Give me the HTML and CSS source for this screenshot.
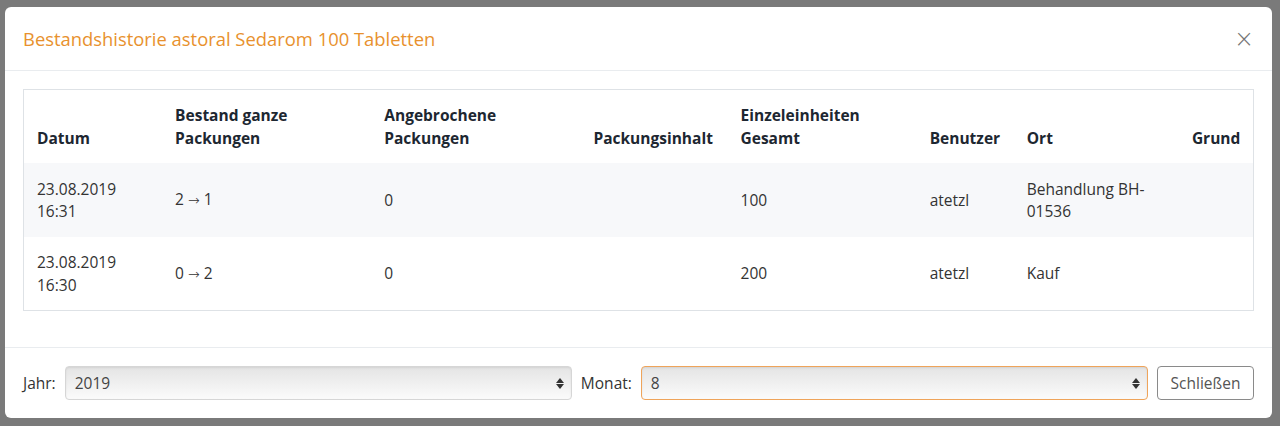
FILE: index.html
```html
<!DOCTYPE html>
<html lang="de">
<head>
<meta charset="utf-8">
<title>Bestandshistorie</title>
<link rel="stylesheet" href="styles.css">
</head>
<body>
<div class="backdrop"></div>
<div class="modal">
  <div class="modal-header">
    <h2 class="modal-title">Bestandshistorie astoral Sedarom 100 Tabletten</h2>
    <button class="close" type="button" aria-label="Close">×</button>
  </div>
  <div class="modal-body">
    <div class="table-box">
      <table class="hist">
        <colgroup>
          <col class="c1"><col class="c2"><col class="c3"><col class="c4">
          <col class="c5"><col class="c6"><col class="c7"><col class="c8">
        </colgroup>
        <thead>
          <tr>
            <th>Datum</th>
            <th>Bestand ganze<br>Packungen</th>
            <th>Angebrochene<br>Packungen</th>
            <th>Packungsinhalt</th>
            <th>Einzeleinheiten<br>Gesamt</th>
            <th>Benutzer</th>
            <th>Ort</th>
            <th class="right">Grund</th>
          </tr>
        </thead>
        <tbody>
          <tr class="odd">
            <td>23.08.2019<br>16:31</td>
            <td>2 <span class="arr">→</span> 1</td>
            <td>0</td>
            <td></td>
            <td>100</td>
            <td>atetzl</td>
            <td>Behandlung BH-<br>01536</td>
            <td></td>
          </tr>
          <tr>
            <td>23.08.2019<br>16:30</td>
            <td>0 <span class="arr">→</span> 2</td>
            <td>0</td>
            <td></td>
            <td>200</td>
            <td>atetzl</td>
            <td>Kauf</td>
            <td></td>
          </tr>
        </tbody>
      </table>
    </div>
  </div>
  <div class="modal-footer">
    <label class="lbl">Jahr:</label>
    <div class="sel"><span>2019</span><span class="arrows"><i class="up"></i><i class="down"></i></span></div>
    <label class="lbl">Monat:</label>
    <div class="sel focus"><span>8</span><span class="arrows"><i class="up"></i><i class="down"></i></span></div>
    <button class="btn" type="button">Schließen</button>
  </div>
</div>
</body>
</html>
```
FILE: styles.css
```css
* { box-sizing: border-box; }
html, body {
  margin: 0;
  padding: 0;
  width: 1280px;
  height: 426px;
  overflow: hidden;
  font-family: "Open Sans", "Noto Sans", "Liberation Sans", sans-serif;
  background: #ffffff;
}
.backdrop {
  position: fixed;
  inset: 0;
  background: #7a7a7a;
}
.modal {
  position: absolute;
  left: 5px;
  top: 7px;
  width: 1267px;
  height: 411px;
  background: #fff;
  border-radius: 6px;
  display: flex;
  flex-direction: column;
  color: #212529;
}
.modal-header {
  height: 64px;
  border-bottom: 1px solid #e9ecef;
  display: flex;
  align-items: center;
  justify-content: space-between;
  padding: 0 18px;
}
.modal-title {
  margin: 0;
  font-size: 18.4px;
  font-weight: 400;
  color: #e8912d;
}
.close {
  border: 0;
  background: none;
  font-family: "DejaVu Sans", sans-serif;
  font-size: 24px;
  font-weight: 300;
  color: #777;
  padding: 0;
  line-height: 1;
}
.modal-body {
  padding: 18px 18px 36px;
  border-bottom: 1px solid #e9ecef;
}
.table-box {
  border: 1px solid #dee2e6;
}
.hist {
  width: 100%;
  border-collapse: collapse;
  table-layout: fixed;
  font-size: 15.5px;
  line-height: 22.5px;
}
.c1 { width: 138px; }
.c2 { width: 209px; }
.c3 { width: 209px; }
.c4 { width: 147px; }
.c5 { width: 189px; }
.c6 { width: 97px; }
.c7 { width: 165px; }
.c8 { width: 74px; }
.hist th {
  font-weight: 700;
  text-align: left;
  vertical-align: bottom;
  padding: 12px 13px 14px 13px;
  height: 73px;
  color: #1d2731;
  white-space: nowrap;
}
.hist th.right { text-align: right; padding-right: 14px; }
.hist td {
  padding: 14px 13px 14px 13px;
  vertical-align: middle;
  color: #333;
  height: 74px;
}
.hist tbody tr:last-child td { height: 73px; }
.hist tr.odd td { background: #f7f8fa; }
.arr {
  font-family: "DejaVu Sans", sans-serif;
  font-size: 14px;
  font-weight: 300;
}
.modal-footer {
  flex: 1;
  display: flex;
  align-items: center;
  padding: 0 18px;
  gap: 9px;
  font-size: 15.5px;
}
.lbl { color: #333; }
.sel {
  flex: 1;
  height: 34px;
  border: 1px solid #d6d6d6;
  border-radius: 4px;
  background: linear-gradient(#e4e4e4, #fbfbfb);
  box-shadow: inset 0 1px 2px rgba(0,0,0,0.08);
  display: flex;
  align-items: center;
  justify-content: space-between;
  padding: 0 7px 0 9px;
  color: #444;
}
.sel.focus {
  border-color: #efa45a;
}
.arrows {
  display: flex;
  flex-direction: column;
  gap: 1px;
}
.arrows i {
  width: 0;
  height: 0;
  border-left: 4px solid transparent;
  border-right: 4px solid transparent;
}
.arrows .up { border-bottom: 5px solid #333; }
.arrows .down { border-top: 5px solid #333; }
.btn {
  height: 34px;
  width: 97px;
  background: #fff;
  border: 1px solid #8a8a8a;
  border-radius: 4px;
  font-family: inherit;
  font-size: 15.5px;
  color: #555;
}
```
